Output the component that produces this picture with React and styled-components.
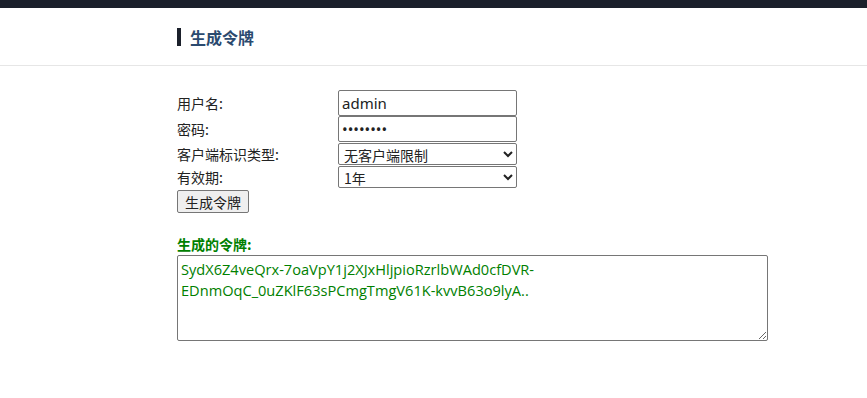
import styled, { createGlobalStyle } from "styled-components"

const GlobalStyle = createGlobalStyle`
body{
  margin: 0;
  background: #fff;
  font-family: "Noto Sans CJK SC", "Noto Sans", sans-serif;
  color: #222;
}
`

export default function App(){
  return(
    <>
      <GlobalStyle />
      <TopBar />
      <Header>
        <Title>生成令牌</Title>
      </Header>
      <Content>
        <Form>
          <Row h={26}>
            <Label>用户名:</Label>
            <TextInput type="text" defaultValue="admin" />
          </Row>
          <Row h={26}>
            <Label>密码:</Label>
            <TextInput type="password" defaultValue="12345678" />
          </Row>
          <Row h={22} top={1}>
            <Label>客户端标识类型:</Label>
            <Select defaultValue="none">
              <option value="none">无客户端限制</option>
            </Select>
          </Row>
          <Row h={22} top={1}>
            <Label>有效期:</Label>
            <Select defaultValue="1y">
              <option value="1y">1年</option>
            </Select>
          </Row>
          <Button type="button">生成令牌</Button>
        </Form>
        <ResultLabel>生成的令牌:</ResultLabel>
        <TokenArea readOnly defaultValue="SydX6Z4veQrx-7oaVpY1j2XJxHljpioRzrlbWAd0cfDVR-EDnmOqC_0uZKlF63sPCmgTmgV61K-kvvB63o9lyA.." />
      </Content>
    </>
  )
}

const TopBar = styled.div`
height: 8px;
background: #1b202b;
`

const Header = styled.header`
height: 57px;
border-bottom: 1px solid #e6e6e6;
display: flex;
align-items: center;
padding-left: 177px;
`

const Title = styled.h1`
margin: 0;
padding-left: 9px;
border-left: 4px solid #1b202b;
font-size: 16px;
font-weight: bold;
line-height: 18px;
color: #2b4a6f;
`

const Content = styled.main`
padding: 24px 0 0 177px;
width: 591px;
`

const Form = styled.form`
display: flex;
flex-direction: column;
`

const Row = styled.div`
display: flex;
align-items: center;
height: ${p => p.h}px;
margin-top: ${p => p.top || 0}px;
`

const Label = styled.label`
width: 161px;
font-size: 14px;
color: #222;
`

const TextInput = styled.input`
box-sizing: border-box;
width: 179px;
height: 26px;
border: 1px solid #767676;
border-radius: 2px;
padding: 0 3px;
font-family: "Noto Sans", "Noto Sans CJK SC", sans-serif;
font-size: 15px;
color: #222;
outline: none;
`

const Select = styled.select`
box-sizing: border-box;
width: 179px;
height: 22px;
border: 1px solid #767676;
border-radius: 2px;
padding: 0 1px;
font-family: "Noto Sans CJK SC", sans-serif;
font-size: 14px;
color: #222;
background: #fff;
`

const Button = styled.button`
align-self: flex-start;
margin-top: 2px;
box-sizing: border-box;
height: 23px;
padding: 0 7px;
border: 1px solid #767676;
border-radius: 2px;
background: #efefef;
font-family: "Noto Sans CJK SC", sans-serif;
font-size: 14px;
color: #222;
`

const ResultLabel = styled.div`
margin-top: 22px;
font-size: 14px;
font-weight: bold;
color: #008000;
line-height: 18px;
`

const TokenArea = styled.textarea`
display: block;
box-sizing: border-box;
margin-top: 2px;
width: 591px;
height: 86px;
border: 1px solid #767676;
border-radius: 2px;
padding: 3px 3px 2px;
font-family: "Open Sans", "Noto Sans", sans-serif;
font-size: 14.6px;
line-height: 21px;
color: #008000;
resize: both;
outline: none;
`
